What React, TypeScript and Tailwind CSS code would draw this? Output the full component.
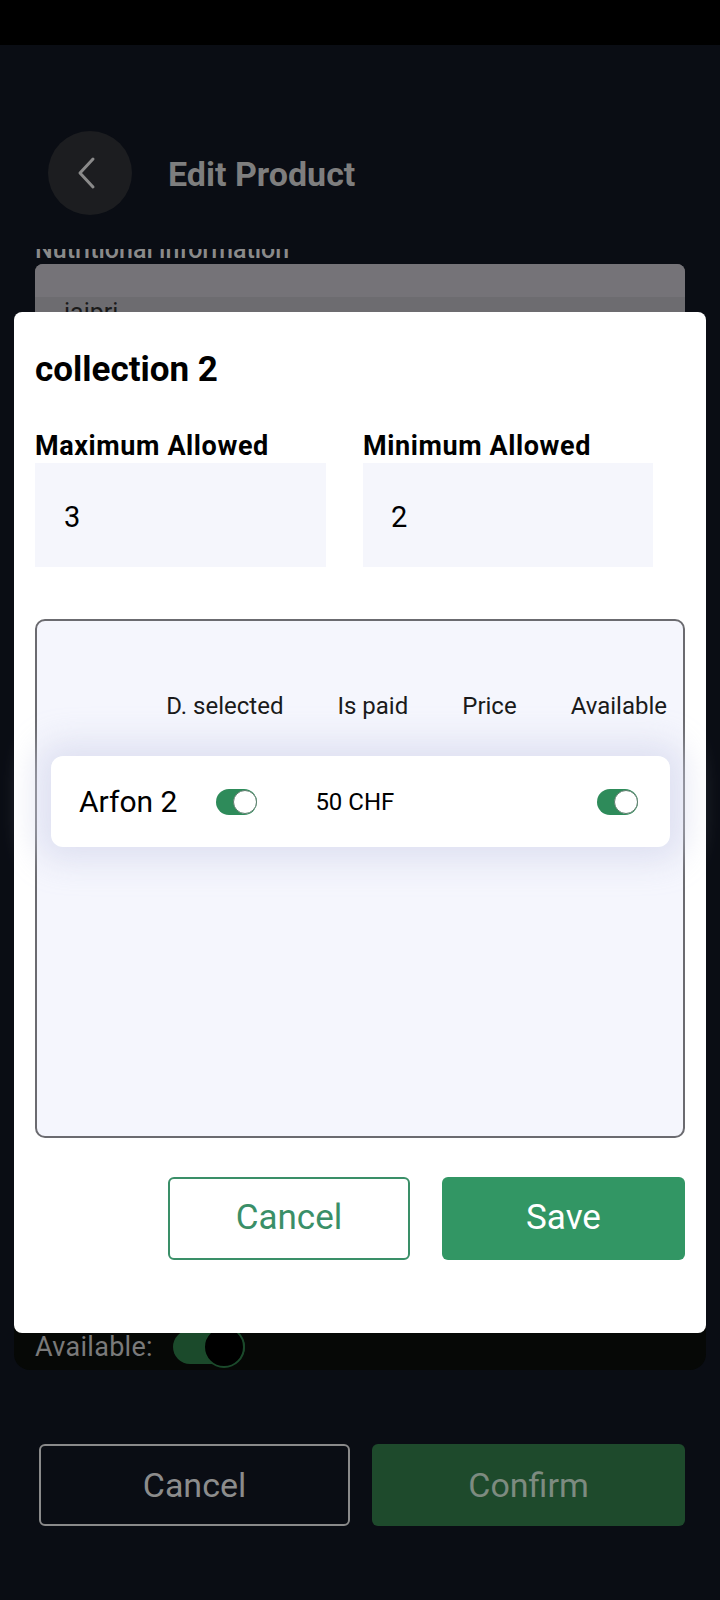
import React from "react";

function Toggle() {
  return (
    <div className="relative w-[41px] h-[26px] rounded-full bg-[#2e8b5a] shrink-0">
      <div className="absolute right-0 top-[1px] w-[24px] h-[24px] rounded-full bg-white border border-[#5f7d6d]" />
    </div>
  );
}

export default function App() {
  return (
    <div className="relative w-[720px] h-[1600px] bg-[#0a0d14] overflow-hidden font-['Roboto',sans-serif]">
      {/* status bar */}
      <div className="h-[45px] bg-black" />

      {/* header */}
      <div className="flex items-center gap-[36px] pl-[48px] mt-[86px]">
        <div className="w-[84px] h-[84px] rounded-full bg-[#1c1d20] flex items-center justify-center">
          <svg width="40" height="40" viewBox="0 0 40 40" fill="none" stroke="#8a8a8a" strokeWidth="3" strokeLinecap="round" strokeLinejoin="round">
            <path d="M23 6 L10 20 L23 34" />
          </svg>
        </div>
        <div className="text-[34px] leading-none font-bold text-[#7e7e7e] pt-[2px]">Edit Product</div>
      </div>

      {/* clipped label */}
      <div className="mt-[34px] h-[9px] overflow-hidden pl-[35px]">
        <div className="-mt-[12px] text-[25px] leading-none font-medium text-[#8a8a8a] whitespace-nowrap">
          Nutritional information
        </div>
      </div>

      {/* gray input box */}
      <div className="mt-[6px] mx-[35px] h-[400px] rounded-[8px] bg-[#6d6c70] overflow-hidden">
        <div className="h-[33px] bg-[#757378]" />
        <div className="pl-[29px] pt-[3px] text-[25px] leading-none text-[#1a1a1a]">iaipri</div>
      </div>

      {/* dark card */}
      <div className="mt-[16px] mx-[14px] h-[690px] rounded-[16px] bg-[#060806] flex flex-col justify-end">
        <div className="flex items-center gap-[20px] pl-[21px] h-[40px] mb-[3px]">
          <span className="text-[27px] leading-none text-[#7a7a7a] tracking-[0.3px]">Available:</span>
          <div className="relative w-[72px] h-[34px] rounded-full bg-[#1b4a2b]">
            <div className="absolute right-0 -top-[4px] w-[42px] h-[42px] rounded-full bg-black border-2 border-[#1b4a2b]" />
          </div>
        </div>
      </div>

      {/* bottom buttons */}
      <div className="flex gap-[22px] pl-[39px] pr-[35px] mt-[74px]">
        <div className="w-[311px] h-[82px] rounded-[6px] border-2 border-[#8a8a8a] flex items-center justify-center text-[34px] text-[#8c8c8c]">
          Cancel
        </div>
        <div className="w-[313px] h-[82px] rounded-[6px] bg-[#1e4a2c] flex items-center justify-center text-[34px] text-[#7d8b80]">
          Confirm
        </div>
      </div>

      {/* modal */}
      <div className="absolute left-[14px] top-[312px] w-[692px] h-[1021px] bg-white rounded-[8px] px-[21px] pt-[40px]">
        <div className="text-[35px] leading-none font-bold text-black">collection 2</div>

        <div className="flex gap-[37px] mt-[46px]">
          <div className="flex flex-col">
            <div className="text-[27px] leading-none font-bold text-black tracking-[0.6px]">Maximum Allowed</div>
            <div className="mt-[3px] w-[291px] h-[104px] bg-[#f5f6fc] flex items-center pl-[29px] pt-[4px] text-[29px] leading-none text-black">
              3
            </div>
          </div>
          <div className="flex flex-col">
            <div className="text-[27px] leading-none font-bold text-black tracking-[0.6px]">Minimum Allowed</div>
            <div className="mt-[3px] w-[290px] h-[104px] bg-[#f5f6fc] flex items-center pl-[28px] pt-[4px] text-[29px] leading-none text-black">
              2
            </div>
          </div>
        </div>

        {/* table */}
        <div className="mt-[52px] w-[650px] h-[519px] rounded-[10px] border-2 border-[#6b6b70] bg-[#f5f6fd]">
          <div className="flex justify-end gap-[54px] pr-[16px] pt-[73px] text-[24px] leading-none text-[#1a1a1a]">
            <span>D. selected</span>
            <span>Is paid</span>
            <span>Price</span>
            <span>Available</span>
          </div>
          <div className="mt-[38px] ml-[14px] mr-[13px] h-[91px] rounded-[12px] bg-white shadow-[0_0_32px_14px_rgba(215,217,238,0.75)] flex items-center pl-[28px] pr-[32px]">
            <span className="text-[30px] leading-none text-black">Arfon 2</span>
            <div className="ml-[39px]">
              <Toggle />
            </div>
            <span className="ml-[58px] text-[24px] leading-none text-black">50 CHF</span>
            <div className="ml-auto">
              <Toggle />
            </div>
          </div>
        </div>

        {/* modal buttons */}
        <div className="flex justify-end gap-[32px] mt-[39px]">
          <div className="w-[242px] h-[83px] rounded-[6px] border-2 border-[#3a8f68] flex items-center justify-center text-[35px] text-[#3a8f68]">
            Cancel
          </div>
          <div className="w-[243px] h-[83px] rounded-[6px] bg-[#329664] flex items-center justify-center text-[35px] text-white">
            Save
          </div>
        </div>
      </div>
    </div>
  );
}
